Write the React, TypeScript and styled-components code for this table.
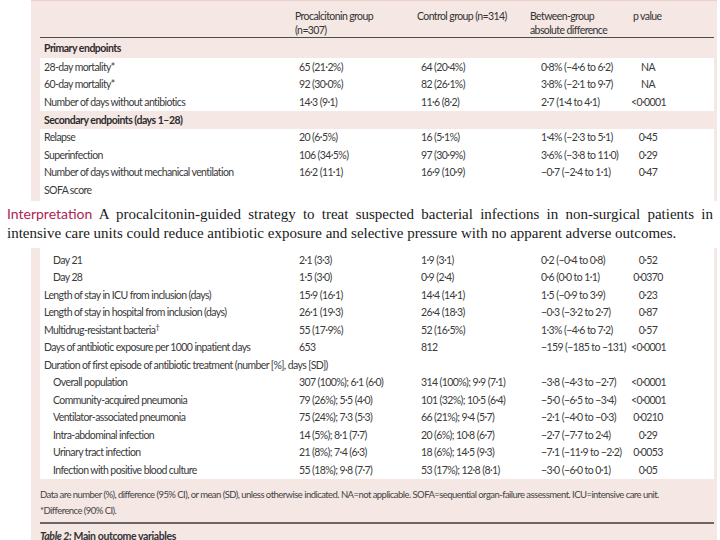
import styled, { createGlobalStyle } from "styled-components";

const GlobalStyle = createGlobalStyle`
  body {
    margin: 0;
    background: #ffffff;
  }
`;

const PINK = "#f4e7e4";
const TEXT = "#3a3a3a";

type Row = {
  label: string;
  values?: [string, string, string, string];
  indent?: boolean;
  mark?: string;
};

const primaryRows: Row[] = [
  { label: "28-day mortality*", values: ["65 (21·2%)", "64 (20·4%)", "0·8% (−4·6 to 6·2)", "NA"] },
  { label: "60-day mortality*", values: ["92 (30·0%)", "82 (26·1%)", "3·8% (−2·1 to 9·7)", "NA"] },
  { label: "Number of days without antibiotics", values: ["14·3 (9·1)", "11·6 (8·2)", "2·7 (1·4 to 4·1)", "<0·0001"] },
];

const secondaryRows: Row[] = [
  { label: "Relapse", values: ["20 (6·5%)", "16 (5·1%)", "1·4% (−2·3 to 5·1)", "0·45"] },
  { label: "Superinfection", values: ["106 (34·5%)", "97 (30·9%)", "3·6% (−3·8 to 11·0)", "0·29"] },
  { label: "Number of days without mechanical ventilation", values: ["16·2 (11·1)", "16·9 (10·9)", "−0·7 (−2·4 to 1·1)", "0·47"] },
  { label: "SOFA score" },
  { label: "" },
  { label: "" },
  { label: "" },
  { label: "Day 21", indent: true, values: ["2·1 (3·3)", "1·9 (3·1)", "0·2 (−0·4 to 0·8)", "0·52"] },
  { label: "Day 28", indent: true, values: ["1·5 (3·0)", "0·9 (2·4)", "0·6 (0·0 to 1·1)", "0·0370"] },
  { label: "Length of stay in ICU from inclusion (days)", values: ["15·9 (16·1)", "14·4 (14·1)", "1·5 (−0·9 to 3·9)", "0·23"] },
  { label: "Length of stay in hospital from inclusion (days)", values: ["26·1 (19·3)", "26·4 (18·3)", "−0·3 (−3·2 to 2·7)", "0·87"] },
  { label: "Multidrug-resistant bacteria", mark: "†", values: ["55 (17·9%)", "52 (16·5%)", "1·3% (−4·6 to 7·2)", "0·57"] },
  { label: "Days of antibiotic exposure per 1000 inpatient days", values: ["653", "812", "−159 (−185 to −131)", "<0·0001"] },
  { label: "Duration of first episode of antibiotic treatment (number [%], days [SD])" },
  { label: "Overall population", indent: true, values: ["307 (100%); 6·1 (6·0)", "314 (100%); 9·9 (7·1)", "−3·8 (−4·3 to −2·7)", "<0·0001"] },
  { label: "Community-acquired pneumonia", indent: true, values: ["79 (26%); 5·5 (4·0)", "101 (32%); 10·5 (6·4)", "−5·0 (−6·5 to −3·4)", "<0·0001"] },
  { label: "Ventilator-associated pneumonia", indent: true, values: ["75 (24%); 7·3 (5·3)", "66 (21%); 9·4 (5·7)", "−2·1 (−4·0 to −0·3)", "0·0210"] },
  { label: "Intra-abdominal infection", indent: true, values: ["14 (5%); 8·1 (7·7)", "20 (6%); 10·8 (6·7)", "−2·7 (−7·7 to 2·4)", "0·29"] },
  { label: "Urinary tract infection", indent: true, values: ["21 (8%); 7·4 (6·3)", "18 (6%); 14·5 (9·3)", "−7·1 (−11·9 to −2·2)", "0·0053"] },
  { label: "Infection with positive blood culture", indent: true, values: ["55 (18%); 9·8 (7·7)", "53 (17%); 12·8 (8·1)", "−3·0 (−6·0 to 0·1)", "0·05"] },
];

const Page = styled.div`
  position: relative;
  width: 720px;
  height: 540px;
  overflow: hidden;
  background: #ffffff;
`;

const Panel = styled.div`
  box-sizing: border-box;
  width: 686px;
  min-height: 560px;
  margin-left: 31px;
  padding: 0 3px 0 9px;
  background: ${PINK};
  border-top: 1px solid #eccfcd;
  font-family: Lato, "Liberation Sans", sans-serif;
  font-size: 10.5px;
  letter-spacing: -0.6px;
  color: ${TEXT};
`;

const columns = "255px 122px 113px 103px 1fr";

const HeadRow = styled.div`
  display: grid;
  grid-template-columns: ${columns};
  height: 37px;
  box-sizing: border-box;
  padding-top: 8px;
  line-height: 14px;
  border-bottom: 1px solid #4d4d4d;
`;

const HeadCell = styled.div`
  white-space: nowrap;
  color: #333;
`;

const Section = styled.div<{ $h: number }>`
  display: flex;
  align-items: center;
  height: ${(p) => p.$h}px;
  padding-left: 4px;
  font-weight: 700;
  letter-spacing: -0.5px;
  color: #2c2c2c;
`;

const Block = styled.div`
  background: #ffffff;
`;

const DataRow = styled.div`
  display: grid;
  grid-template-columns: ${columns};
  align-items: center;
  height: 17.5px;
  white-space: nowrap;
`;

const Label = styled.div<{ $indent?: boolean }>`
  padding-left: ${(p) => (p.$indent ? 13 : 4)}px;

  sup {
    font-size: 8px;
    line-height: 0;
  }
`;

const Value = styled.div<{ $pad: number }>`
  padding-left: ${(p) => p.$pad}px;
`;

const PValue = styled.div`
  width: 34px;
  margin-left: -2px;
  text-align: center;
`;

const Footnote = styled.div`
  padding-top: 8px;
  font-size: 9.5px;
  letter-spacing: -0.55px;
  line-height: 16px;
  color: #444;
  white-space: nowrap;
`;

const Rule = styled.div`
  height: 2px;
  margin-top: 3px;
  background: #6f6565;
`;

const Caption = styled.div`
  margin-top: 4px;
  line-height: 16px;
  font-size: 10.5px;
  letter-spacing: -0.4px;
  font-weight: 700;
  color: #333;

  em {
    font-style: italic;
  }
`;

const Overlay = styled.div`
  position: absolute;
  top: 201px;
  left: 0;
  width: 720px;
  height: 47px;
  box-sizing: border-box;
  padding: 3px 7px 0 7px;
  background: #ffffff;
  font-family: "Liberation Serif", "Times New Roman", serif;
  font-size: 15px;
  line-height: 19px;
  color: #1a1a1a;
  text-align: justify;
`;

const Lead = styled.span`
  font-family: Lato, "Liberation Sans", sans-serif;
  font-size: 14px;
  color: #b02352;
`;

const TableRows = ({ rows }: { rows: Row[] }) => (
  <Block>
    {rows.map((r, i) => (
      <DataRow key={i}>
        <Label $indent={r.indent}>
          {r.label}
          {r.mark && <sup>{r.mark}</sup>}
        </Label>
        {r.values && (
          <>
            <Value $pad={4}>{r.values[0]}</Value>
            <Value $pad={4}>{r.values[1]}</Value>
            <Value $pad={11}>{r.values[2]}</Value>
            <PValue>{r.values[3]}</PValue>
          </>
        )}
      </DataRow>
    ))}
  </Block>
);

export default function App() {
  return (
    <Page>
      <GlobalStyle />
      <Panel>
        <HeadRow>
          <HeadCell />
          <HeadCell>
            Procalcitonin group
            <br />
            (n=307)
          </HeadCell>
          <HeadCell>Control group (n=314)</HeadCell>
          <HeadCell>
            Between-group
            <br />
            absolute difference
          </HeadCell>
          <HeadCell>p value</HeadCell>
        </HeadRow>
        <Section $h={20}>Primary endpoints</Section>
        <TableRows rows={primaryRows} />
        <Section $h={18}>Secondary endpoints (days 1–28)</Section>
        <TableRows rows={secondaryRows} />
        <Footnote>
          Data are number (%), difference (95% CI), or mean (SD), unless otherwise indicated. NA=not applicable.
          SOFA=sequential organ-failure assessment. ICU=intensive care unit.
          <br />
          *Difference (90% CI).
        </Footnote>
        <Rule />
        <Caption>
          <em>Table 2:</em> Main outcome variables
        </Caption>
      </Panel>
      <Overlay>
        <Lead>Interpretation</Lead> A procalcitonin-guided strategy to treat suspected bacterial infections in
        non-surgical patients in intensive care units could reduce antibiotic exposure and selective pressure with
        no apparent adverse outcomes.
      </Overlay>
    </Page>
  );
}
